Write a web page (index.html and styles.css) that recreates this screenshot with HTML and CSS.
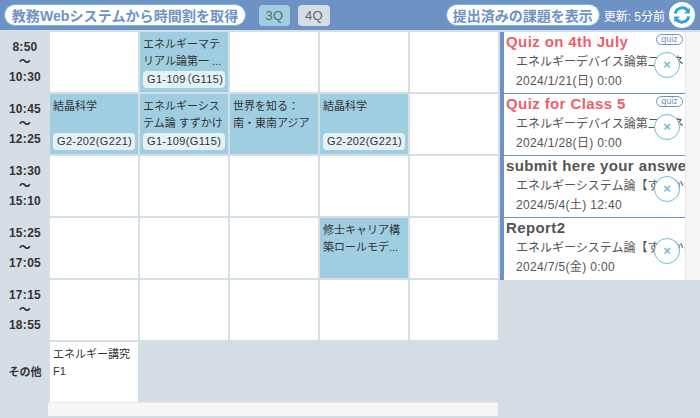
FILE: index.html
```html
<!DOCTYPE html>
<html lang="ja">
<head>
  <meta charset="UTF-8" />
  <title>時間割</title>
  <link rel="stylesheet" href="styles.css">
</head>
<body>
  <header class="topbar">
    <button class="pill fetch-btn">教務Webシステムから時間割を取得</button>
    <button class="q-btn q-active">3Q</button>
    <button class="q-btn">4Q</button>
    <button class="pill done-btn">提出済みの課題を表示</button>
    <span class="updated">更新: 5分前</span>
    <button class="reload" aria-label="更新">
      <svg viewBox="0 0 20 20" width="20" height="20">
        <path d="M3.2 8.6A7 7 0 0 1 15.6 5.6" fill="none" stroke="#2ea3dc" stroke-width="3"/>
        <path d="M17.8 2.6V8.6H12.2Z" fill="#2ea3dc"/>
        <path d="M16.8 11.4A7 7 0 0 1 4.4 14.4" fill="none" stroke="#2ea3dc" stroke-width="3"/>
        <path d="M2.2 17.4V11.4H7.8Z" fill="#2ea3dc"/>
      </svg>
    </button>
  </header>

  <main class="content">
    <section class="timetable">
      <div class="grid">
        <div class="time">8:50<br>〜<br>10:30</div>
        <div class="cell"></div>
        <div class="cell lesson">
          <p class="name">エネルギーマテリアル論第一 ...</p>
          <span class="room">G1-109（G115)</span>
        </div>
        <div class="cell"></div>
        <div class="cell"></div>
        <div class="cell"></div>

        <div class="time">10:45<br>〜<br>12:25</div>
        <div class="cell lesson">
          <p class="name">結晶科学</p>
          <span class="room">G2-202(G221)</span>
        </div>
        <div class="cell lesson">
          <p class="name">エネルギーシステム論 すずかけ</p>
          <span class="room">G1-109(G115)</span>
        </div>
        <div class="cell lesson">
          <p class="name">世界を知る：<br>南・東南アジア</p>
        </div>
        <div class="cell lesson">
          <p class="name">結晶科学</p>
          <span class="room">G2-202(G221)</span>
        </div>
        <div class="cell"></div>

        <div class="time">13:30<br>〜<br>15:10</div>
        <div class="cell"></div>
        <div class="cell"></div>
        <div class="cell"></div>
        <div class="cell"></div>
        <div class="cell"></div>

        <div class="time">15:25<br>〜<br>17:05</div>
        <div class="cell"></div>
        <div class="cell"></div>
        <div class="cell"></div>
        <div class="cell lesson">
          <p class="name">修士キャリア構築ロールモデ...</p>
        </div>
        <div class="cell"></div>

        <div class="time">17:15<br>〜<br>18:55</div>
        <div class="cell"></div>
        <div class="cell"></div>
        <div class="cell"></div>
        <div class="cell"></div>
        <div class="cell"></div>

        <div class="time time-other">その他</div>
        <div class="cell">
          <p class="name">エネルギー講究<br>F1</p>
        </div>
      </div>
      <div class="hscroll"></div>
    </section>

    <aside class="tasks">
      <div class="task-list">
        <div class="task">
          <h3 class="task-title overdue">Quiz on 4th July</h3>
          <p class="task-sub">エネルギーデバイス論第二エネルギー</p>
          <p class="task-date">2024/1/21(日) 0:00</p>
          <span class="tag">quiz</span>
          <button class="close">×</button>
        </div>
        <div class="task">
          <h3 class="task-title overdue">Quiz for Class 5</h3>
          <p class="task-sub">エネルギーデバイス論第二エネルギー</p>
          <p class="task-date">2024/1/28(日) 0:00</p>
          <span class="tag">quiz</span>
          <button class="close">×</button>
        </div>
        <div class="task">
          <h3 class="task-title">submit here your answers</h3>
          <p class="task-sub">エネルギーシステム論【すずかけ台】</p>
          <p class="task-date">2024/5/4(土) 12:40</p>
          <button class="close">×</button>
        </div>
        <div class="task">
          <h3 class="task-title">Report2</h3>
          <p class="task-sub">エネルギーシステム論【すずかけ台】</p>
          <p class="task-date">2024/7/5(金) 0:00</p>
          <button class="close">×</button>
        </div>
      </div>
      <div class="vscroll"></div>
    </aside>
  </main>
</body>
</html>
```

FILE: styles.css
```css
:root {
  --blue: #6f92c4;
  --sky: #9fcee1;
  --bg: #d5dee4;
  --ring: #6fbcdc;
  --text: #333;
  --muted: #555;
  --red: #ee5f68;
}
* {
  box-sizing: border-box;
}
html, body {
  margin: 0;
  height: 418px;
  overflow: hidden;
}
body {
  background-color: var(--bg);
  color: var(--text);
  font-family: "Liberation Sans", "Noto Sans CJK JP", sans-serif;
}
button {
  font-family: inherit;
  cursor: pointer;
}
p {
  margin: 0;
}

.topbar {
  display: flex;
  align-items: center;
  height: 30px;
  padding: 0 5px 0 4px;
  background-color: var(--blue);
}
.pill {
  height: 22px;
  padding: 0;
  background-color: #fff;
  border: 1px solid var(--ring);
  border-radius: 11px;
  color: var(--blue);
  font-size: 14px;
  font-weight: 700;
  white-space: nowrap;
}
.fetch-btn {
  width: 242px;
  letter-spacing: 0.1px;
}
.done-btn {
  width: 154px;
  margin-left: auto;
}
.q-btn {
  width: 31px;
  height: 21px;
  margin-left: 13px;
  padding: 0;
  background-color: var(--bg);
  border: none;
  border-radius: 4px;
  color: #666;
  font-size: 13px;
  letter-spacing: 0.3px;
}
.q-btn.q-active {
  background-color: var(--sky);
}
.q-btn + .q-btn {
  margin-left: 8px;
  width: 32px;
}
.updated {
  margin-left: 4px;
  color: #fff;
  font-size: 12px;
  white-space: nowrap;
}
.reload {
  display: flex;
  align-items: center;
  justify-content: center;
  width: 26px;
  height: 26px;
  margin-left: 4px;
  padding: 0;
  background-color: #fff;
  border: none;
  border-radius: 50%;
}

.content {
  display: flex;
  align-items: flex-start;
  padding-top: 2px;
}
.timetable {
  width: 500px;
  flex: none;
}
.grid {
  display: grid;
  grid-template-columns: 48px repeat(5, 88px);
  grid-auto-rows: 60px;
  gap: 2px;
  padding-right: 2px;
}
.time {
  display: flex;
  flex-direction: column;
  align-items: center;
  justify-content: center;
  padding: 1px 0 0 2px;
  color: var(--text);
  font-size: 12px;
  font-weight: 700;
  line-height: 15px;
  text-align: center;
  letter-spacing: 0.3px;
}
.time-other {
  font-size: 11px;
  letter-spacing: 0;
}
.cell {
  position: relative;
  padding: 4px 3px 3px;
  background-color: #fff;
  font-size: 11px;
  line-height: 17px;
  overflow: hidden;
}
.lesson {
  background-color: var(--sky);
}
.name {
  color: var(--text);
}
.room {
  position: absolute;
  left: 3px;
  right: 3px;
  bottom: 4px;
  height: 17px;
  padding-left: 4px;
  background-color: rgba(255, 255, 255, 0.72);
  border-radius: 4px;
  font-feature-settings: "palt";
  letter-spacing: 0.35px;
  line-height: 17px;
  white-space: nowrap;
  overflow: hidden;
}
.hscroll {
  height: 14px;
  margin-left: 48px;
  margin-right: 2px;
  background-color: #f6f6f6;
  border-top: 1px solid #e8e8e8;
}

.tasks {
  display: flex;
  width: 200px;
  flex: none;
  border-left: 4px solid var(--blue);
  height: 248px;
}
.task-list {
  flex: 1;
  min-width: 0;
  background-color: #fff;
  overflow: hidden;
}
.task {
  position: relative;
  height: 62px;
  padding-left: 2px;
  border-bottom: 1px solid var(--blue);
  white-space: nowrap;
  overflow: hidden;
}
.task:last-child {
  border-bottom: none;
}
.task-title {
  margin: 0;
  color: var(--muted);
  font-size: 15px;
  letter-spacing: 0.4px;
  line-height: 20px;
}
.task-title.overdue {
  color: var(--red);
}
.task-sub,
.task-date {
  padding-left: 10px;
  color: var(--muted);
  font-size: 12px;
  line-height: 19px;
}
.task-sub {
  margin-top: 1px;
}
.task-date {
  letter-spacing: 0.35px;
}
.tag {
  position: absolute;
  top: 2px;
  right: 2px;
  width: 27px;
  height: 11px;
  background-color: #fff;
  border: 1px solid var(--blue);
  border-radius: 6px;
  color: var(--blue);
  font-size: 9px;
  line-height: 9px;
  text-align: center;
}
.close {
  position: absolute;
  top: 20px;
  right: 5px;
  width: 26px;
  height: 26px;
  padding: 0;
  background-color: #fff;
  border: 1px solid var(--ring);
  border-radius: 50%;
  color: var(--ring);
  font-size: 13px;
  font-weight: 700;
  line-height: 22px;
}
.vscroll {
  width: 15px;
  flex: none;
  background-color: #f6f6f6;
  border-left: 1px solid #e8e8e8;
}
```
